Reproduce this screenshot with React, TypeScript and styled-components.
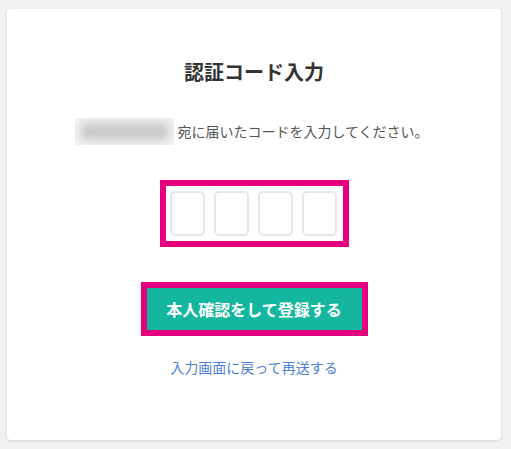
import styled, { createGlobalStyle } from 'styled-components'

const GlobalStyle = createGlobalStyle`
  html, body {
    margin: 0;
    padding: 0;
    background: #f1f1f1;
  }
  body {
    font-family: "Noto Sans CJK JP", "Noto Sans", sans-serif;
    color: #333;
  }
`

const Page = styled.div`
  padding: 9px 10px 9px 7px;
  box-sizing: border-box;
`

const Card = styled.div`
  width: 494px;
  height: 431px;
  background: #fff;
  border-radius: 4px;
  box-shadow: 0 1px 3px rgba(0, 0, 0, 0.12);
  display: flex;
  flex-direction: column;
  align-items: center;
  padding-top: 49px;
  box-sizing: border-box;
`

const Title = styled.h1`
  margin: 0;
  font-size: 20px;
  line-height: 28px;
  font-weight: 700;
  color: #333;
`

const Lead = styled.p`
  margin: 32px 0 0;
  display: flex;
  align-items: center;
  gap: 3px;
  font-size: 14px;
  line-height: 27px;
  color: #555;
  transform: translateX(-2px);
`

const Masked = styled.span`
  display: inline-block;
  width: 99px;
  height: 27px;
  background: linear-gradient(#f2f2f2, #f2f2f2) padding-box;
  position: relative;
  overflow: hidden;

  &::after {
    content: '';
    position: absolute;
    inset: 5px 6px;
    background: #c9c9c9;
    filter: blur(4px);
  }
`

const Highlight = styled.div<{ $pad: string }>`
  margin-top: 35px;
  border: 6px solid #e4007f;
  padding: ${(p) => p.$pad};
  display: flex;
`

const Codes = styled.div`
  display: flex;
  gap: 9px;
`

const CodeBox = styled.input`
  width: 35px;
  height: 45px;
  box-sizing: border-box;
  border: 2px solid #e6e6e6;
  border-radius: 5px;
  background: #fff;
  padding: 0;
  text-align: center;
  font-size: 20px;
  outline: none;
`

const Submit = styled.button`
  width: 215px;
  height: 42px;
  border: none;
  background: #14b79d;
  color: #fff;
  font-family: inherit;
  font-size: 16px;
  font-weight: 700;
  cursor: pointer;
`

const Back = styled.a`
  margin-top: 21px;
  font-size: 14px;
  line-height: 20px;
  color: #4d80d6;
  text-decoration: none;
  cursor: pointer;
`

export default function App() {
  return (
    <>
      <GlobalStyle />
      <Page>
        <Card>
          <Title>認証コード入力</Title>
          <Lead>
            <Masked />
            宛に届いたコードを入力してください。
          </Lead>
          <Highlight $pad="5px 6px 5px 4px">
            <Codes>
              {[0, 1, 2, 3].map((i) => (
                <CodeBox key={i} maxLength={1} inputMode="numeric" />
              ))}
            </Codes>
          </Highlight>
          <Highlight $pad="0">
            <Submit>本人確認をして登録する</Submit>
          </Highlight>
          <Back>入力画面に戻って再送する</Back>
        </Card>
      </Page>
    </>
  )
}
